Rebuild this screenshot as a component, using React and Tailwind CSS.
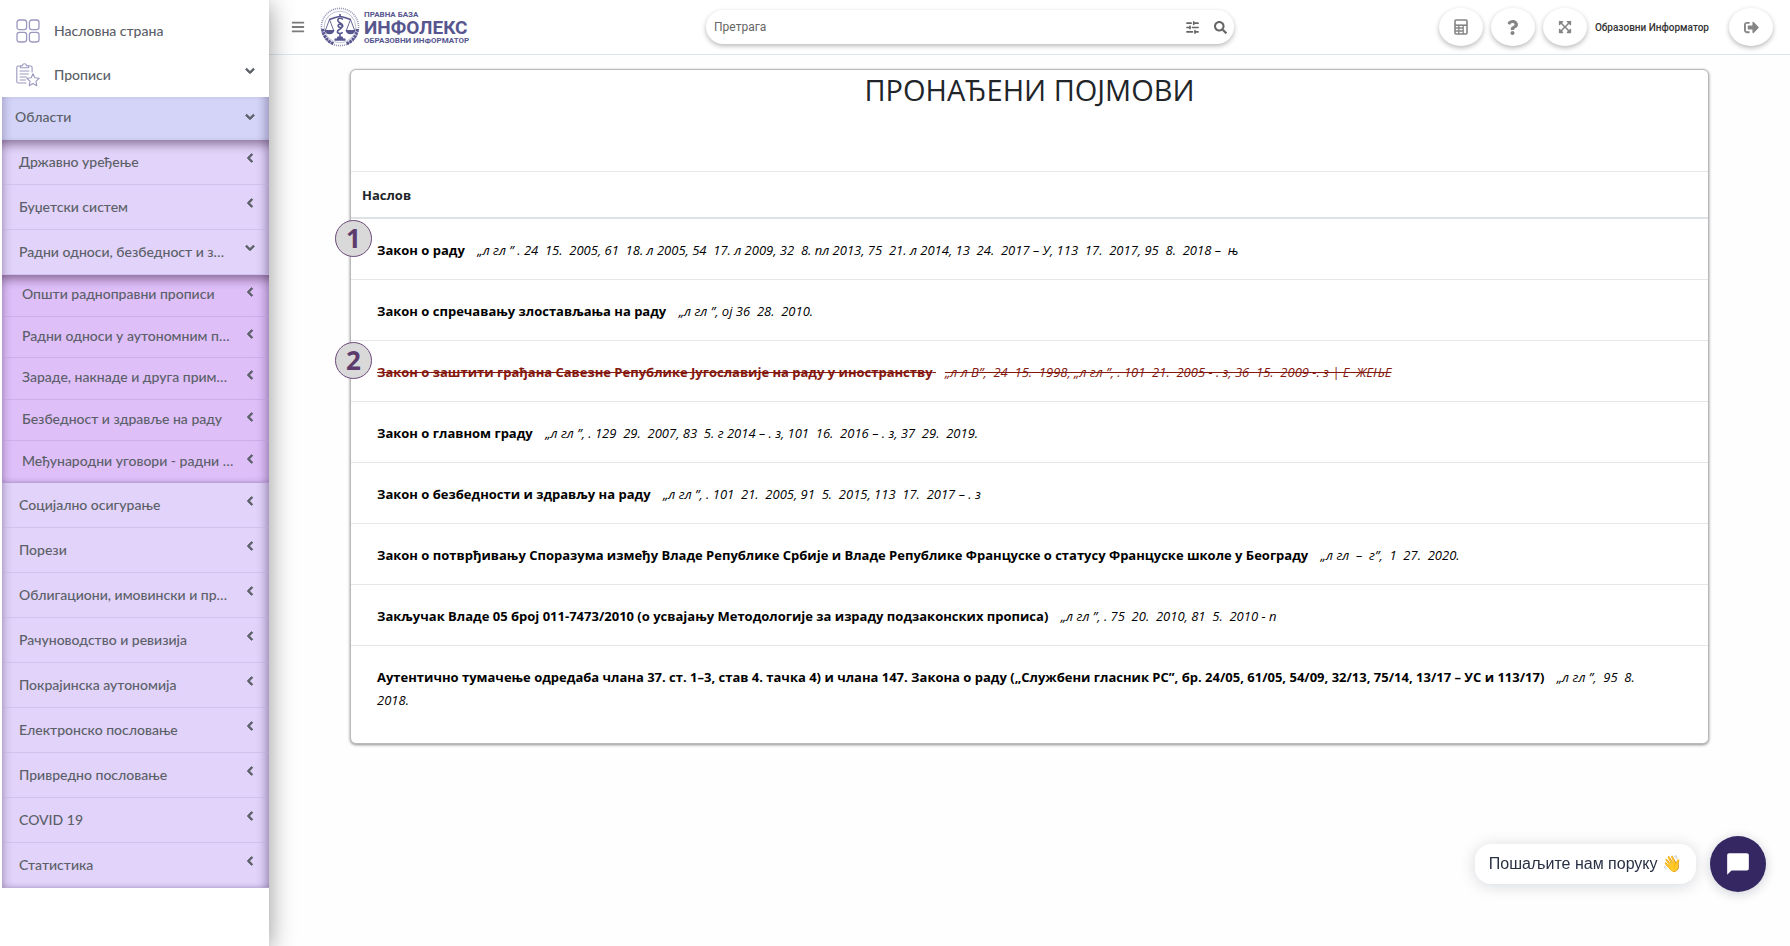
import React from "react";
import {
  FaBars,
  FaChevronDown,
  FaChevronLeft,
  FaExpandArrowsAlt,
  FaQuestion,
  FaSearch,
  FaSignOutAlt,
} from "react-icons/fa";
import { SlidersHorizontal } from "lucide-react";

const laborAreas = [
  "Општи радноправни прописи",
  "Радни односи у аутономним п…",
  "Зараде, накнаде и друга прим…",
  "Безбедност и здравље на раду",
  "Међународни уговори - радни …",
];

const areas = [
  { name: "Државно уређење" },
  { name: "Буџетски систем" },
  { name: "Радни односи, безбедност и з…", children: laborAreas },
  { name: "Социјално осигурање" },
  { name: "Порези" },
  { name: "Облигациони, имовински и пр…" },
  { name: "Рачуноводство и ревизија" },
  { name: "Покрајинска аутономија" },
  { name: "Електронско пословање" },
  { name: "Привредно пословање" },
  { name: "COVID 19" },
  { name: "Статистика" },
];

const results = [
  {
    title: "Закон о раду",
    source:
      "„л гл ” . 24  15.  2005, 61  18. л 2005, 54  17. л 2009, 32  8. пл 2013, 75  21. л 2014, 13  24.  2017 – У, 113  17.  2017, 95  8.  2018 –  њ",
    mark: 1,
  },
  { title: "Закон о спречавању злостављања на раду", source: "„л гл ”, ој 36  28.  2010." },
  {
    title: "Закон о заштити грађана Савезне Републике Југославије на раду у иностранству",
    source:
      "„л л В”,  24  15.  1998, „л гл ”, . 101  21.  2005 - . з, 36  15.  2009 -. з | Е  ЖЕЊЕ",
    mark: 2,
    repealed: true,
  },
  {
    title: "Закон о главном граду",
    source: "„л гл ”, . 129  29.  2007, 83  5. г 2014 – . з, 101  16.  2016 – . з, 37  29.  2019.",
  },
  {
    title: "Закон о безбедности и здрављу на раду",
    source: "„л гл ”, . 101  21.  2005, 91  5.  2015, 113  17.  2017 – . з",
  },
  {
    title:
      "Закон о потврђивању Споразума између Владе Републике Србије и Владе Републике Француске о статусу Француске школе у Београду",
    source: "„л гл  –  г”,  1  27.  2020.",
  },
  {
    title: "Закључак Владе 05 број 011-7473/2010 (о усвајању Методологије за израду подзаконских прописа)",
    source: "„л гл ”, . 75  20.  2010, 81  5.  2010 - п",
  },
  {
    title:
      "Аутентично тумачење одредаба члана 37. ст. 1–3, став 4. тачка 4) и члана 147. Закона о раду („Службени гласник РС”, бр. 24/05, 61/05, 54/09, 32/13, 75/14, 13/17 – УС и 113/17)",
    source: "„л гл ”,  95  8.  2018.",
  },
];

function GridIcon() {
  return (
    <svg viewBox="0 0 24 24" className="size-6 shrink-0" fill="none" stroke="#9a98bf" strokeWidth="1.3">
      <rect x="1" y="1" width="9.6" height="9.6" rx="2.4" />
      <rect x="13.4" y="1" width="9.6" height="9.6" rx="2.4" />
      <rect x="1" y="13.4" width="9.6" height="9.6" rx="2.4" />
      <rect x="13.4" y="13.4" width="9.6" height="9.6" rx="2.4" />
    </svg>
  );
}

function ClipboardStarIcon() {
  return (
    <svg
      viewBox="0 0 24 24"
      className="size-6 shrink-0"
      fill="none"
      stroke="#9a98bf"
      strokeWidth="1.1"
      strokeLinecap="round"
      strokeLinejoin="round"
    >
      <path d="M4.5 3H2.2A1.4 1.4 0 0 0 .8 4.400V18.600A1.400 1.400 0 0 0 2.200 20H10M12.500 3h2.200a1.400 1.400 0 0 1 1.400 1.400V9" />
      <path d="M4.500 4.800V2.800h2a2 2 0 0 1 4 0h2v2z" />
      <path d="M4 8h9M4 11h8.500M4 14h6.500M4 17h5.500" />
      <path d="M17 10.800l1.800 4 4.400.500-3.300 3 .9 4.400L17 20.500l-3.800 2.200.9-4.400-3.300-3 4.400-.5z" />
    </svg>
  );
}

function CalculatorIcon() {
  return (
    <svg viewBox="0 0 14 16" className="h-4 w-[14px]" fill="none" stroke="#858585">
      <rect x="1" y="1" width="12" height="14" rx="1" strokeWidth="1.600" />
      <path d="M1 6.200h12" strokeWidth="1.600" />
      <path d="M1 9h8.500M1 12h8.500M4.800 6v9M9.200 6v9" strokeWidth="1.300" />
    </svg>
  );
}

function Emblem() {
  return (
    <svg viewBox="0 0 40 40" className="size-10 shrink-0" fill="none" stroke="#57568f">
      <circle cx="20" cy="20" r="18.600" strokeWidth="1.600" strokeDasharray="1.100 0.900" opacity=".6" />
      <circle cx="20" cy="20" r="15.800" strokeWidth=".6" opacity=".6" />
      <path d="M2.600 22c.8 7 5 12.500 11.400 15M37.400 22c-.8 7-5 12.500-11.400 15" strokeWidth="3" strokeDasharray="2.600 .7" />
      <path d="M9 12.500c4-.5 6.500-3 11-3s7 2.500 11 3" strokeWidth="1.500" />
      <path d="M9.500 12.500 5.500 23M9.500 12.500 13.500 23M30.500 12.500 26.500 23M30.500 12.500 34.500 23" strokeWidth=".9" />
      <path d="M4.500 23h10c-.4 2.800-2.400 4.200-5 4.200s-4.600-1.400-5-4.200zM25.500 23h10c-.4 2.800-2.400 4.200-5 4.200s-4.600-1.400-5-4.200z" fill="#57568f" stroke="none" />
      <path d="M22.800 12.500c-1-1.800-5-1.700-5 .7 0 2.600 5 3 5 5.800 0 2-4.600 2-4.600-.2 0-2.300 4-2.300 4 .8 0 2.600-4.800 2.800-4.800 5.200 0 2.200 4 2 5.200.4M20 7v2.500M20 26v5" strokeWidth="1.600" />
      <path d="M17.500 29.500h5l.8 2h2.200v2.300h-11v-2.300h2.200z" fill="#57568f" stroke="none" />
    </svg>
  );
}

const sideShade =
  "shadow-[inset_8px_0_8px_-6px_rgba(60,40,90,0.3),inset_-10px_0_9px_-6px_rgba(60,40,90,0.35)]";
const listShade =
  "shadow-[inset_0_11px_10px_-6px_rgba(60,25,60,0.45),inset_8px_0_8px_-6px_rgba(60,40,90,0.3),inset_-10px_0_9px_-6px_rgba(60,40,90,0.35),inset_0_-6px_6px_-6px_rgba(60,40,90,0.3)]";
const chevron = "size-[10px] overflow-visible stroke-current [stroke-width:50]";

function Sidebar() {
  return (
    <nav
      aria-label="Главни мени"
      className="relative z-10 w-[269px] shrink-0 bg-white pt-[9px] pl-[2px] font-[Lato,'Noto_Sans',sans-serif] text-sm font-medium text-[#5b6068] shadow-[0_4px_24px_rgba(0,0,0,0.42)]"
    >
      <a href="#home" className="flex h-11 items-center gap-[14px] pl-[14px]">
        <GridIcon />
        Насловна страна
      </a>
      <button type="button" aria-expanded="true" className="flex h-11 w-full items-center gap-[14px] pr-[14px] pl-[14px]">
        <ClipboardStarIcon />
        <span className="flex-1 text-left">Прописи</span>
        <FaChevronDown className={`mb-2 ${chevron}`} />
      </button>
      <button
        type="button"
        aria-expanded="true"
        className={`flex h-[43px] w-full items-center justify-between bg-[#d3d4f7] pr-[14px] pb-1 pl-[13px] ${sideShade}`}
      >
        Области
        <FaChevronDown className={chevron} />
      </button>
      <ul className={`bg-[#e1d3f9] ${listShade}`}>
        {areas.map((area) => (
          <li key={area.name}>
            <button
              type="button"
              aria-expanded={Boolean(area.children)}
              className="flex h-[45px] w-full items-center justify-between border-b border-[#bfaedb]/45 pr-[14px] pl-[17px]"
            >
              {area.name}
              {area.children ? (
                <FaChevronDown className={`mb-2 ${chevron}`} />
              ) : (
                <FaChevronLeft className={`mb-2 ${chevron}`} />
              )}
            </button>
            {area.children && (
              <ul className={`grid h-[208px] auto-rows-fr bg-[#debff8] ${listShade}`}>
                {area.children.map((name) => (
                  <li key={name}>
                    <button
                      type="button"
                      aria-expanded="false"
                      className="flex h-full w-full items-center justify-between border-b border-[#b79ad6]/45 pr-[14px] pb-[2px] pl-5"
                    >
                      {name}
                      <FaChevronLeft className={`mb-1 ${chevron}`} />
                    </button>
                  </li>
                ))}
              </ul>
            )}
          </li>
        ))}
      </ul>
    </nav>
  );
}

const roundButton =
  "flex h-[38px] w-11 items-center justify-center rounded-[50%] bg-white text-[#858585] shadow-[0_2px_5px_rgba(0,0,0,0.28)]";

function Header() {
  return (
    <header className="flex h-[55px] items-center border-b border-[#dfe7ee] bg-white pr-[17px] pl-[22px] font-[Roboto,sans-serif]">
      <button type="button" aria-label="Мени" className="text-[#7b7b7b]">
        <FaBars className="size-[14px]" />
      </button>
      <a href="#home" className="ml-[15px] flex items-center gap-1 text-[#57568f]">
        <Emblem />
        <span className="flex flex-col font-bold">
          <span className="text-[8px] leading-[9px]">ПРАВНА БАЗА</span>
          <span className="text-[19px] leading-[17px]">ИНФОЛЕКС</span>
          <span className="text-[8px] leading-[9px]">ОБРАЗОВНИ ИНФОРМАТОР</span>
        </span>
      </a>
      <div className="flex flex-1 justify-center pl-8">
        <form role="search" className="flex h-[34px] w-[528px] items-center rounded-full bg-white pr-[7px] pl-2 shadow-[0_2px_5px_rgba(0,0,0,0.28)]">
          <input
            type="text"
            aria-label="Претрага"
            placeholder="Претрага"
            className="min-w-0 flex-1 bg-transparent text-xs text-[#555] outline-none placeholder:text-[#666]"
          />
          <button type="button" aria-label="Филтери" className="mr-[14px] text-[#666]">
            <SlidersHorizontal size={15} strokeWidth={2.5} />
          </button>
          <button type="submit" aria-label="Тражи" className="text-[#666]">
            <FaSearch className="size-[13px]" />
          </button>
        </form>
      </div>
      <div className="flex items-center gap-2">
        <button type="button" aria-label="Калкулатор" className={roundButton}>
          <CalculatorIcon />
        </button>
        <button type="button" aria-label="Помоћ" className={roundButton}>
          <FaQuestion className="size-[15px]" />
        </button>
        <button type="button" aria-label="Цео екран" className={roundButton}>
          <FaExpandArrowsAlt className="size-[14px]" />
        </button>
        <span className="mr-3 text-[10px] font-medium text-[#333]">Образовни Информатор</span>
        <button type="button" aria-label="Одјава" className={roundButton}>
          <FaSignOutAlt className="size-[15px]" />
        </button>
      </div>
    </header>
  );
}

function Results() {
  return (
    <section className="mx-[81px] mt-[14px] rounded-md border border-[#b9b9bb] bg-white pb-[14px] shadow-[0_1px_3px_rgba(0,0,0,0.45)]">
      <h1 className="h-[101px] text-center text-[29px] leading-10 text-[#212529]">ПРОНАЂЕНИ ПОЈМОВИ</h1>
      <table className="w-full border-collapse text-left text-[13px] leading-[23px] text-black">
        <thead>
          <tr className="border-t border-b-2 border-t-[#e6e7ea] border-b-[#dee2e6]">
            <th scope="col" className="px-[11px] pt-3 pb-[10px] text-[#212529]">
              Наслов
            </th>
          </tr>
        </thead>
        <tbody>
          {results.map((item) => (
            <tr key={item.title} className="border-b border-[#e6e7ea] last:border-b-0">
              <td className={`relative pt-5 pr-10 pb-[17px] pl-[26px] ${item.repealed ? "text-[#84180f]" : ""}`}>
                {item.mark && (
                  <span className="absolute top-px -left-4 flex size-[37px] items-center justify-center rounded-full border border-[#6b4a7c] bg-[#d9d9d9] text-[26px] font-bold text-[#5d3c6d]">
                    {item.mark}
                  </span>
                )}
                <a href="#document" className={item.repealed ? "line-through" : ""}>
                  <b className="mr-[9px]">{item.title} </b>
                  <i className="whitespace-pre-wrap">{item.source}</i>
                </a>
              </td>
            </tr>
          ))}
        </tbody>
      </table>
    </section>
  );
}

function Chat() {
  return (
    <aside className="fixed right-6 bottom-[54px] z-20 flex items-center gap-[14px] font-['Liberation_Sans',sans-serif]">
      <button
        type="button"
        className="h-10 rounded-2xl bg-white px-[14px] text-base text-[#283044] shadow-[0_2px_16px_rgba(0,20,50,0.16)]"
      >
        Пошаљите нам поруку 👋
      </button>
      <button
        type="button"
        aria-label="Отвори ћаскање"
        className="flex size-14 items-center justify-center rounded-full bg-[#342762] shadow-[0_2px_12px_rgba(0,20,50,0.2)]"
      >
        <svg viewBox="0 0 24 24" className="size-[26px]" fill="#fff">
          <path d="M3.800 2h16.400A1.800 1.800 0 0 1 22 3.800v12.400a1.800 1.800 0 0 1-1.800 1.800H6l-4 4V3.800A1.800 1.800 0 0 1 3.800 2z" />
        </svg>
      </button>
    </aside>
  );
}

export default function App() {
  return (
    <div className="flex min-h-screen bg-[#fefefe] font-['Open_Sans','Noto_Sans',sans-serif]">
      <Sidebar />
      <div className="min-w-0 flex-1">
        <Header />
        <main>
          <Results />
        </main>
      </div>
      <Chat />
    </div>
  );
}
